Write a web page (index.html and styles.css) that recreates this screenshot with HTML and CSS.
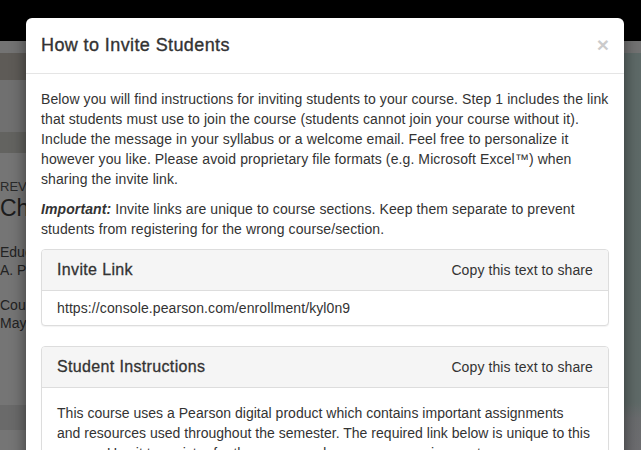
FILE: index.html
```html
<!DOCTYPE html>
<html lang="en">
<head>
<meta charset="utf-8">
<title>How to Invite Students</title>
<link rel="stylesheet" href="styles.css">
</head>
<body>
<div class="page">
  <div class="topbar"></div>
  <div class="subbar"></div>
  <div class="layout">
    <div class="main">
      <div class="band band-nav"></div>
      <div class="band band-plain"></div>
      <div class="band band-tabs"></div>
      <div class="content">
        <div class="content-text">
          <div class="eyebrow">REVIEW</div>
          <div class="course-title">Chapter Review</div>
          <div class="meta meta-first">Educator</div>
          <div class="meta">A. Pearson</div>
          <div class="meta meta-gap">Course Dates</div>
          <div class="meta">May 1 – Aug 31</div>
        </div>
        <div class="band band-foot"></div>
      </div>
    </div>
    <div class="aside"></div>
  </div>

  <div class="modal">
    <div class="modal-header">
      <h4 class="modal-title">How to Invite Students</h4>
      <span class="close">×</span>
    </div>
    <div class="modal-body">
      <p>Below you will find instructions for inviting students to your course. Step 1 includes the link<br>that students must use to join the course (students cannot join your course without it).<br>Include the message in your syllabus or a welcome email. Feel free to personalize it<br>however you like. Please avoid proprietary file formats (e.g. Microsoft Excel™) when<br>sharing the invite link.</p>
      <p><strong><em>Important:</em></strong> Invite links are unique to course sections. Keep them separate to prevent<br>students from registering for the wrong course/section.</p>

      <div class="panel">
        <div class="panel-heading">
          <h3 class="panel-title">Invite Link</h3>
          <span class="panel-note">Copy this text to share</span>
        </div>
        <div class="panel-link">https://console.pearson.com/enrollment/kyl0n9</div>
      </div>

      <div class="panel">
        <div class="panel-heading">
          <h3 class="panel-title">Student Instructions</h3>
          <span class="panel-note">Copy this text to share</span>
        </div>
        <div class="panel-body">
          This course uses a Pearson digital product which contains important assignments<br>and resources used throughout the semester. The required link below is unique to this<br>course. Use it to register for the course and access your assignments.
        </div>
      </div>
    </div>
  </div>
</div>
</body>
</html>
```

FILE: styles.css
```css
html, body {
  margin: 0;
  padding: 0;
}

body {
  width: 641px;
  height: 450px;
  overflow: hidden;
  font-family: "Liberation Sans", Arial, sans-serif;
  font-size: 14px;
  line-height: 20px;
  letter-spacing: 0.1px;
  color: #333;
}

.page {
  position: relative;
  width: 641px;
  height: 450px;
  overflow: hidden;
  background: #747474;
}

.topbar {
  height: 41px;
  background: #000;
}

.subbar {
  height: 12px;
  background: #737373;
}

.layout {
  display: flex;
  height: 397px;
}

.main {
  flex: 1;
  display: flex;
  flex-direction: column;
  background: #757575;
}

.aside {
  width: 60px;
  background: linear-gradient(#5e6a68 0%, #5f6a68 88%, #6a6c6e 92%, #6d6d70 100%);
}

.band-nav {
  height: 27px;
  background: #5e5b57;
}

.band-plain {
  height: 52px;
  background: #707070;
}

.band-tabs {
  height: 21px;
  background: #636360;
}

.content {
  padding-top: 25px;
  color: #222;
}

.content-text {
  white-space: nowrap;
  letter-spacing: 0;
}

.eyebrow {
  font-size: 13px;
  line-height: 18px;
  color: #2a2a2a;
}

.course-title {
  font-size: 23px;
  line-height: 25px;
  color: #1c1c1c;
}

.meta {
  font-size: 14px;
  line-height: 18px;
}

.meta-first {
  margin-top: 22px;
}

.meta-gap {
  margin-top: 17px;
}

.band-foot {
  margin-top: 73px;
  height: 25px;
  background: #6a6a6a;
}

.modal {
  position: absolute;
  top: 18px;
  left: 26px;
  width: 598px;
  height: 470px;
  background: #fff;
  border-radius: 6px;
  box-shadow: 0 5px 15px rgba(0, 0, 0, 0.5);
}

.modal-header {
  display: flex;
  justify-content: space-between;
  align-items: center;
  padding: 15px;
  border-bottom: 1px solid #e5e5e5;
}

.modal-title {
  margin: 0;
  font-size: 18px;
  line-height: 25px;
  font-weight: normal;
  letter-spacing: 0.4px;
  -webkit-text-stroke: 0.35px #333;
  color: #333;
}

.close {
  font-size: 21px;
  font-weight: bold;
  line-height: 1;
  color: #000;
  opacity: 0.2;
  margin-top: -2px;
  letter-spacing: 0;
}

.modal-body {
  padding: 15px;
}

.modal-body p {
  margin: 0 0 10px;
}

.panel {
  margin-bottom: 20px;
  border: 1px solid #ddd;
  border-radius: 4px;
  box-shadow: 0 1px 1px rgba(0, 0, 0, 0.05);
  background: #fff;
}

.panel-heading {
  display: flex;
  justify-content: space-between;
  align-items: center;
  padding: 10px 15px;
  background: #f5f5f5;
  border-bottom: 1px solid #ddd;
  border-radius: 3px 3px 0 0;
}

.panel-title {
  margin: 0;
  font-size: 16px;
  line-height: 20px;
  font-weight: normal;
  letter-spacing: 0.35px;
  -webkit-text-stroke: 0.3px #333;
  color: #333;
}

.panel-note {
  color: #333;
}

.panel-link {
  padding: 7px 15px;
}

.panel-body {
  padding: 15px;
  white-space: nowrap;
  letter-spacing: 0.02px;
}
```
